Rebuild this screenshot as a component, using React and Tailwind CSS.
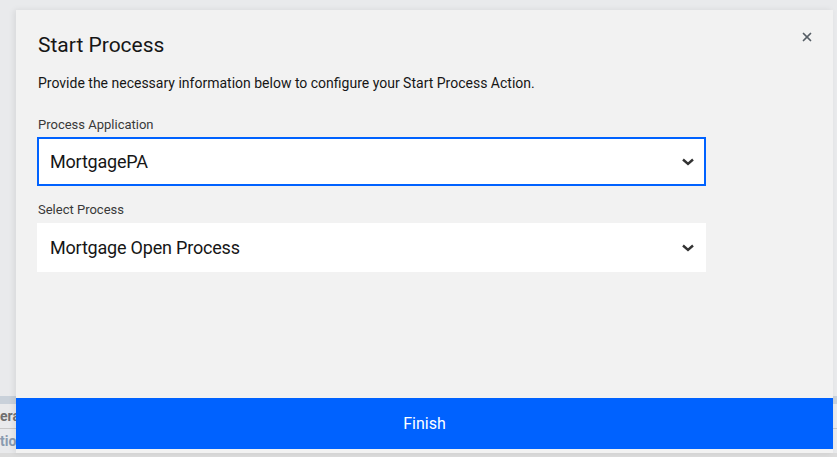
import { X } from 'lucide-react';

const Chevron = () => (
  <svg width="12" height="8" viewBox="0 0 12 8" className="text-[#333333]">
    <path d="M1 1.5 L6 6 L11 1.5" fill="none" stroke="currentColor" strokeWidth="2.4" />
  </svg>
);

const SelectBox = ({ value, focused }) => (
  <div
    className={`w-[669px] h-[49px] bg-white flex items-center justify-between ${
      focused ? 'border-2 border-[#0062ff] pl-[11px] pr-[10px]' : 'pl-[13px] pr-[12px]'
    }`}
  >
    <span className="text-[18px] text-[#161616] tracking-[-0.2px]">{value}</span>
    <Chevron />
  </div>
);

export default function App() {
  return (
    <div
      className="relative w-[837px] h-[457px] overflow-hidden bg-[#e9eaec]"
      style={{ fontFamily: 'Roboto, "Noto Sans", sans-serif' }}
    >
      {/* page behind the modal */}
      <div className="flex flex-col w-full h-full">
        <div className="flex-1" />
        <div className="h-[8px] bg-[#c9d1da]" />
        <div className="h-[25px] flex items-center text-[14px] font-bold text-[#6f6f6f] border-b border-[#c8c8c8]">
          era
        </div>
        <div className="h-[24px] flex items-center text-[14px] font-bold text-[#8a9bb0]">
          tio
        </div>
        <div className="h-[4px] bg-[#dcdcdc]" />
      </div>

      {/* modal */}
      <div className="absolute left-[16px] top-[10px] w-[817px] h-[443px] bg-[#f2f2f2] shadow-[-2px_0_6px_rgba(0,0,0,0.08)] flex flex-col">
        <div className="flex-1 pl-[22px] pr-[20px] pt-[22px] relative">
          <button className="absolute right-[19px] top-[20px] text-[#565e66]">
            <X size={14} strokeWidth={3} />
          </button>
          <h2 className="text-[21px] leading-[26px] text-[#161616]">Start Process</h2>
          <p className="mt-[16px] text-[14px] leading-[18px] text-[#161616]">
            Provide the necessary information below to configure your Start Process Action.
          </p>
          <div className="mt-[25px] text-[13px] leading-[16px] text-[#393939]">Process Application</div>
          <div className="mt-[4px] -ml-[1px]">
            <SelectBox value="MortgagePA" focused />
          </div>
          <div className="mt-[16px] text-[13px] leading-[16px] text-[#393939]">Select Process</div>
          <div className="mt-[5px] -ml-[1px]">
            <SelectBox value="Mortgage Open Process" />
          </div>
        </div>
        <button className="h-[51px] bg-[#0062ff] text-white text-[16px] flex items-center justify-center mb-[4px]">
          Finish
        </button>
      </div>
    </div>
  );
}
